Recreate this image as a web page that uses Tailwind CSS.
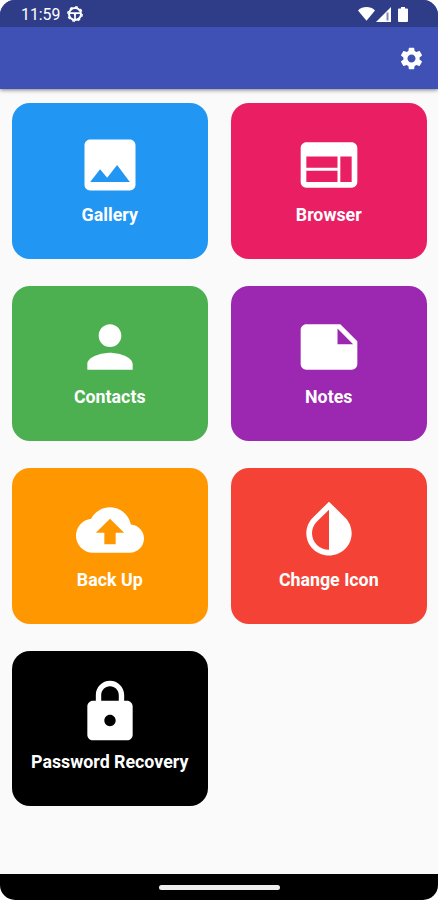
<!DOCTYPE html>
<html lang="en">
<head>
<meta charset="utf-8">
<title>Vault</title>
<script src="https://cdn.jsdelivr.net/npm/@tailwindcss/browser@4"></script>
</head>
<body class="bg-white font-['Roboto',sans-serif]">
<div class="flex h-[900px] w-[438px] flex-col overflow-hidden rounded-[15px] bg-[#fafafa]">
  <header class="z-10 shrink-0 bg-[#3f51b5] shadow-[0_1px_4px_rgba(0,0,0,0.5)]">
    <div class="flex h-[27px] items-center bg-[#2f3c87] pl-[21px] pr-[30px] pt-px text-white">
      <span class="pt-[2px] text-[15.800px] leading-none">11:59</span>
      <svg class="ml-[7px] size-4" viewBox="0 0 16 16" fill="none" stroke="currentColor">
        <circle cx="8" cy="8" r="6" stroke-width="2"/>
        <circle cx="8" cy="8" r="7.200" stroke-width="1.400" stroke-dasharray="2.800 2.855"/>
        <path d="M2.500 7.200h11M8 7.500V14" stroke-width="1.700"/>
        <path d="M5.500 7h5L8 9.800z" fill="currentColor" stroke="none"/>
      </svg>
      <svg class="ml-auto h-[14px] w-[17px]" viewBox="0 0 17 14" fill="currentColor"><path d="M0 3.400C4.800-1 12.200-1 17 3.400L8.500 13.800z"/></svg>
      <svg class="ml-px h-[15px] w-[15px]" viewBox="0 0 15 15"><path d="M15 0v15H0z" fill="#fff"/><path d="M11.500 5.500v8" stroke="#2f3c87" stroke-opacity=".6" stroke-width="2"/></svg>
      <svg class="ml-[7px] h-[15px] w-[10px]" viewBox="0 0 10 15" fill="currentColor"><path d="M3 0h4v1.500h2a1 1 0 0 1 1 1V14a1 1 0 0 1-1 1H1a1 1 0 0 1-1-1V2.500a1 1 0 0 1 1-1h2z"/></svg>
    </div>
    <div class="flex h-[62px] items-center justify-end pr-[13px]">
      <svg class="size-[27px] text-white" viewBox="0 0 24 24" fill="currentColor"><path d="M19.140 12.940c.04-.3.06-.61.06-.94 0-.32-.02-.64-.07-.94l2.030-1.580c.18-.14.23-.41.12-.61l-1.920-3.320c-.12-.22-.37-.29-.59-.22l-2.390.96c-.5-.38-1.030-.7-1.620-.94l-.36-2.540c-.04-.24-.24-.41-.48-.41h-3.840c-.24 0-.43.17-.47.41l-.36 2.540c-.59.24-1.130.57-1.620.94l-2.390-.96c-.22-.08-.47 0-.59.22L2.740 8.870c-.12.21-.08.47.12.61l2.030 1.580c-.05.3-.09.63-.09.94s.02.64.07.94l-2.030 1.580c-.18.14-.23.41-.12.61l1.920 3.320c.12.22.37.29.59.22l2.390-.96c.5.38 1.030.7 1.620.94l.36 2.540c.05.24.24.41.48.41h3.840c.24 0 .44-.17.47-.41l.36-2.540c.59-.24 1.130-.56 1.620-.94l2.390.96c.22.08.47 0 .59-.22l1.920-3.320c.12-.22.07-.47-.12-.61l-2.010-1.580zM12 15.600c-1.980 0-3.600-1.620-3.600-3.600s1.620-3.600 3.600-3.600 3.600 1.620 3.600 3.600-1.620 3.600-3.600 3.600z"/></svg>
    </div>
  </header>

  <main class="grid flex-1 auto-rows-[155.500px] grid-cols-[196.500px_196.500px] content-start gap-x-[22.500px] gap-y-[27px] pl-[11.500px] pt-[14px] text-[17.800px] font-bold leading-5 text-white">
    <div class="flex flex-col items-center rounded-[18px] bg-[#2196f3] pt-[27.500px]">
      <svg class="size-[68px]" viewBox="0 0 24 24" fill="currentColor"><path d="M21 19V5c0-1.100-.9-2-2-2H5c-1.100 0-2 .9-2 2v14c0 1.100.9 2 2 2h14c1.100 0 2-.9 2-2zM8.500 13.500l2.500 3.010L14.500 12l4.500 6H5l3.500-4.500z"/></svg>
      <span class="mt-[6px]">Gallery</span>
    </div>
    <div class="flex flex-col items-center rounded-[18px] bg-[#e91e63] pt-[27.500px]">
      <svg class="size-[68px]" viewBox="0 0 24 24" fill="currentColor"><path d="M20 4H4c-1.100 0-1.990.9-1.990 2L2 18c0 1.100.9 2 2 2h16c1.100 0 2-.9 2-2V6c0-1.100-.9-2-2-2zm-5 14H4v-4h11v4zm0-5H4V9h11v4zm5 5h-4V9h4v9z"/></svg>
      <span class="mt-[6px]">Browser</span>
    </div>
    <div class="flex flex-col items-center rounded-[18px] bg-[#4caf50] pt-[27.500px]">
      <svg class="size-[68px]" viewBox="0 0 24 24" fill="currentColor"><path d="M12 12c2.210 0 4-1.790 4-4s-1.790-4-4-4-4 1.790-4 4 1.790 4 4 4zm0 2c-2.670 0-8 1.340-8 4v2h16v-2c0-2.660-5.330-4-8-4z"/></svg>
      <span class="mt-[5.500px]">Contacts</span>
    </div>
    <div class="flex flex-col items-center rounded-[18px] bg-[#9c27b0] pt-[27.500px]">
      <svg class="size-[68px]" viewBox="0 0 24 24" fill="currentColor"><path d="M22 10l-6-6H4c-1.100 0-2 .9-2 2v12.010c0 1.100.9 1.990 2 1.990l16-.01c1.100 0 2-.89 2-1.990v-8zm-7-4.500l5.500 5.500H15V5.500z"/></svg>
      <span class="mt-[5.500px]">Notes</span>
    </div>
    <div class="flex flex-col items-center rounded-[18px] bg-[#ff9800] pt-[27.500px]">
      <svg class="size-[68px]" viewBox="0 0 24 24" fill="currentColor"><path d="M19.350 10.040C18.670 6.590 15.640 4 12 4 9.110 4 6.600 5.640 5.350 8.040 2.340 8.360 0 10.910 0 14c0 3.310 2.690 6 6 6h13c2.760 0 5-2.240 5-5 0-2.640-2.050-4.780-4.650-4.960zM14 13v4h-4v-4H7l5-5 5 5h-3z"/></svg>
      <span class="mt-[6px]">Back Up</span>
    </div>
    <div class="flex flex-col items-center rounded-[18px] bg-[#f44336] pt-[27.500px]">
      <svg class="size-[68px]" viewBox="0 0 24 24" fill="currentColor"><path d="M12 4.810V19c-3.310 0-6-2.630-6-5.870 0-1.560.62-3.030 1.750-4.140L12 4.810M6.350 7.560C4.900 8.990 4 10.960 4 13.130 4 17.480 7.580 21 12 21s8-3.520 8-7.870c0-2.170-.9-4.140-2.350-5.570L12 2 6.350 7.560z"/></svg>
      <span class="mt-[6px]">Change Icon</span>
    </div>
    <div class="flex flex-col items-center rounded-[18px] bg-black pt-[27.500px]">
      <svg class="size-[68px]" viewBox="0 0 24 24" fill="currentColor"><path d="M18 8h-1V6c0-2.760-2.240-5-5-5S7 3.240 7 6v2H6c-1.100 0-2 .9-2 2v10c0 1.100.9 2 2 2h12c1.100 0 2-.9 2-2V10c0-1.100-.9-2-2-2zm-6 9c-1.100 0-2-.9-2-2s.9-2 2-2 2 .9 2 2-.9 2-2 2zm3.100-9H8.900V6c0-1.710 1.390-3.100 3.100-3.100 1.710 0 3.100 1.390 3.100 3.100v2z"/></svg>
      <span class="mt-[5.500px]">Password Recovery</span>
    </div>
  </main>

  <footer class="flex h-[26px] shrink-0 items-center justify-center bg-black">
    <div class="h-[5px] w-[121px] rounded-full bg-[#eee]"></div>
  </footer>
</div>
</body>
</html>
